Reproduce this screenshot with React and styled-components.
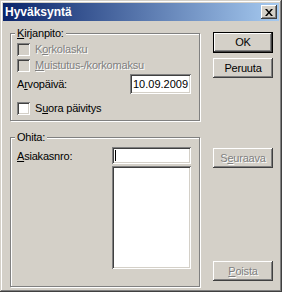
import styled, { createGlobalStyle } from "styled-components";

const GlobalStyle = createGlobalStyle`
  html, body {
    margin: 0;
    padding: 0;
    background: #d4d0c8;
  }
  body {
    font-family: "Liberation Sans", Arial, sans-serif;
    font-size: 11px;
    color: #000;
  }
`;

const Window = styled.div`
  width: 282px;
  height: 292px;
  box-sizing: border-box;
  padding: 3px;
  display: flex;
  flex-direction: column;
  background: #d4d0c8;
  box-shadow:
    inset -1px -1px 0 #404040,
    inset 1px 1px 0 #d4d0c8,
    inset -2px -2px 0 #808080,
    inset 2px 2px 0 #ffffff;
`;

const TitleBar = styled.div`
  height: 18px;
  display: flex;
  align-items: center;
  padding: 0 2px 0 2px;
  background: linear-gradient(to right, #0a246a, #a6caf0);
`;

const Title = styled.span`
  flex: 1;
  color: #fff;
  font-weight: bold;
  font-size: 12px;
  line-height: 14px;
`;

const CloseButton = styled.div`
  width: 16px;
  height: 14px;
  box-sizing: border-box;
  display: flex;
  align-items: center;
  justify-content: center;
  background: #d4d0c8;
  box-shadow:
    inset -1px -1px 0 #404040,
    inset 1px 1px 0 #ffffff,
    inset -2px -2px 0 #808080;
`;

const Body = styled.div`
  flex: 1;
  display: flex;
  padding: 6px 6px 0 7px;
`;

const LeftCol = styled.div`
  width: 190px;
  display: flex;
  flex-direction: column;
  padding-bottom: 2px;
`;

const RightCol = styled.div`
  width: 60px;
  margin-left: 13px;
  display: flex;
  flex-direction: column;
  padding: 5px 0 8px;
`;

const Group = styled.fieldset`
  margin: 0;
  min-width: 0;
  padding: 0 8px 0 6px;
  border: 1px solid #808080;
  box-shadow: inset 1px 1px 0 #fff, 1px 1px 0 #fff;
  flex: ${(p) => (p.$grow ? 1 : "none")};
  margin-top: ${(p) => p.$top || 0}px;
  display: flex;
  flex-direction: column;
`;

const Legend = styled.legend`
  padding: 0 2px;
  margin-left: -2px;
  line-height: 13px;
  background: #d4d0c8;
  letter-spacing: -0.2px;
`;

const Row = styled.div`
  display: flex;
  align-items: ${(p) => (p.$center ? "center" : "flex-start")};
  margin-top: ${(p) => p.$top || 0}px;
  margin-bottom: ${(p) => p.$bottom || 0}px;
  gap: 5px;
`;

const Check = styled.span`
  width: 13px;
  height: 13px;
  flex: none;
  box-sizing: border-box;
  background: ${(p) => (p.$disabled ? "#d4d0c8" : "#fff")};
  box-shadow:
    inset 1px 1px 0 #808080,
    inset -1px -1px 0 #fff,
    inset 2px 2px 0 #404040,
    inset -2px -2px 0 #d4d0c8;
`;

const Label = styled.span`
  line-height: 13px;
  letter-spacing: -0.2px;
  white-space: nowrap;
  margin-top: ${(p) => p.$top || 0}px;
  color: ${(p) => (p.$disabled ? "#808080" : "#000")};
  text-shadow: ${(p) => (p.$disabled ? "1px 1px 0 #fff" : "none")};
`;

const Field = styled.div`
  box-sizing: border-box;
  width: ${(p) => p.$w || 79}px;
  height: ${(p) => p.$h}px;
  margin-left: auto;
  background: #fff;
  display: flex;
  align-items: center;
  padding: 0 2px 0 3px;
  white-space: nowrap;
  overflow: hidden;
  box-shadow:
    inset 1px 1px 0 #808080,
    inset -1px -1px 0 #fff,
    inset 2px 2px 0 #404040,
    inset -2px -2px 0 #d4d0c8;
`;

const Caret = styled.span`
  width: 1px;
  height: 11px;
  background: #000;
`;

const FieldCol = styled.div`
  width: 79px;
  margin-left: auto;
  display: flex;
  flex-direction: column;
  gap: 2px;
`;

const Button = styled.div`
  box-sizing: border-box;
  height: ${(p) => (p.$default ? 21 : 20)}px;
  margin-top: ${(p) => (p.$auto ? "auto" : `${p.$top || 0}px`)};
  display: flex;
  align-items: center;
  justify-content: center;
  line-height: 13px;
  letter-spacing: -0.2px;
  color: ${(p) => (p.$disabled ? "#808080" : "#000")};
  text-shadow: ${(p) => (p.$disabled ? "1px 1px 0 #fff" : "none")};
  border: ${(p) => (p.$default ? "1px solid #000" : "none")};
  box-shadow:
    inset -1px -1px 0 #404040,
    inset 1px 1px 0 #ffffff,
    inset -2px -2px 0 #808080;
`;

const CloseIcon = () => (
  <svg width="8" height="7" viewBox="0 0 8 7">
    <path d="M0 0h2l2 2.5L6 0h2L5 3.5 8 7H6L4 4.5 2 7H0l3-3.5z" fill="#000" />
  </svg>
);

export default function App() {
  return (
    <Window>
      <GlobalStyle />
      <TitleBar>
        <Title>Hyväksyntä</Title>
        <CloseButton><CloseIcon /></CloseButton>
      </TitleBar>
      <Body>
        <LeftCol>
          <Group>
            <Legend><u>K</u>irjanpito:</Legend>
            <Row $top={3}>
              <Check $disabled />
              <Label $disabled>K<u>o</u>rkolasku</Label>
            </Row>
            <Row $top={3}>
              <Check $disabled />
              <Label $disabled><u>M</u>uistutus-/korkomaksu</Label>
            </Row>
            <Row $center $top={2}>
              <Label>A<u>r</u>vopäivä:</Label>
              <Field $w={61} $h={20}>10.09.2009</Field>
            </Row>
            <Row $top={8} $bottom={5}>
              <Check />
              <Label>S<u>u</u>ora päivitys</Label>
            </Row>
          </Group>
          <Group $grow $top={10}>
            <Legend>Ohita:</Legend>
            <Row $top={3}>
              <Label $top={3}><u>A</u>siakasnro:</Label>
              <FieldCol>
                <Field $h={17}><Caret /></Field>
                <Field $h={103} />
              </FieldCol>
            </Row>
          </Group>
        </LeftCol>
        <RightCol>
          <Button $default>OK</Button>
          <Button $top={5}>Peruuta</Button>
          <Button $disabled $top={70}>S<u>e</u>uraava</Button>
          <Button $disabled $auto><u>P</u>oista</Button>
        </RightCol>
      </Body>
    </Window>
  );
}
